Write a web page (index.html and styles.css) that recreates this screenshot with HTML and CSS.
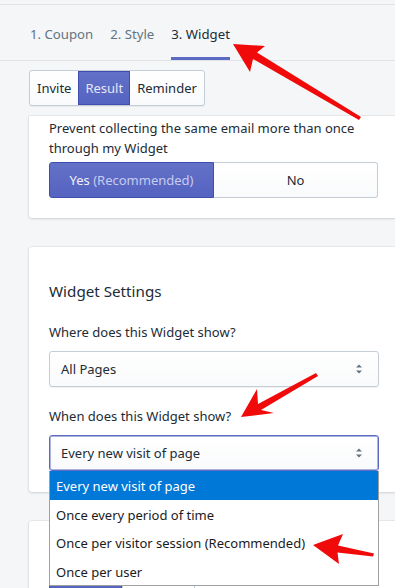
FILE: index.html
```html
<!DOCTYPE html>
<html>
<head>
<meta charset="utf-8">
<link rel="stylesheet" href="styles.css">
</head>
<body>
<div class="page">
  <div class="topline"></div>
  <nav class="tabs">
    <a class="tab">1. Coupon</a>
    <a class="tab">2. Style</a>
    <a class="tab active">3. Widget</a>
  </nav>
  <div class="content">
    <div class="btn-group">
      <button class="seg">Invite</button>
      <button class="seg primary">Result</button>
      <button class="seg">Reminder</button>
    </div>

    <section class="card card-first">
      <p class="text">Prevent collecting the same email more than once through my Widget</p>
      <div class="choice">
        <button class="choice-btn primary">Yes <span class="dim">(Recommended)</span></button>
        <button class="choice-btn">No</button>
      </div>
    </section>

    <section class="card card-settings">
      <h2 class="card-title">Widget Settings</h2>
      <label class="label">Where does this Widget show?</label>
      <div class="select">
        <span>All Pages</span>
        <svg class="caret" width="8" height="12" viewBox="0 0 8 12"><path d="M4 1.5 L7 4.5 L1 4.5 Z M4 10.5 L7 7.5 L1 7.5 Z" fill="#637381"/></svg>
      </div>
      <label class="label label-second">When does this Widget show?</label>
      <div class="select-wrap">
        <div class="select focused">
          <span>Every new visit of page</span>
          <svg class="caret" width="8" height="12" viewBox="0 0 8 12"><path d="M4 1.5 L7 4.5 L1 4.5 Z M4 10.5 L7 7.5 L1 7.5 Z" fill="#637381"/></svg>
        </div>
        <ul class="dropdown">
          <li class="opt selected">Every new visit of page</li>
          <li class="opt">Once every period of time</li>
          <li class="opt">Once per visitor session (Recommended)</li>
          <li class="opt">Once per user</li>
        </ul>
      </div>
    </section>

    <section class="card card-third">
      <div class="mini-group">
        <span class="mini primary"></span>
        <span class="mini"></span>
      </div>
    </section>
  </div>

  <svg class="arrows" width="395" height="588" viewBox="0 0 395 588">
    <polygon fill="#f00a0a" points="233,44 265,46 257,52.5 361,117 359,120 253,59 250,72"/>
    <polygon fill="#f00a0a" points="241,417 257,389 258,404 316,373 318,376 261,410 274,413"/>
    <polygon fill="#f00a0a" points="313,545 343,534 338,545.5 374,553.5 373,556.5 337.5,552.5 339,564"/>
  </svg>
</div>
</body>
</html>
```

FILE: styles.css
```css
* { box-sizing: border-box; }
html, body { margin: 0; padding: 0; }
body {
  width: 395px;
  height: 588px;
  overflow: hidden;
  background: #f4f6f8;
  font-family: "Noto Sans", "Open Sans", sans-serif;
  color: #212b36;
  font-size: 13px;
}
.page { position: relative; width: 395px; height: 588px; overflow: hidden; }
.topline { height: 5px; border-bottom: 1px solid #dfe3e8; }
.tabs {
  display: flex;
  padding-left: 30px;
  gap: 17px;
  border-bottom: 1px solid #dfe3e8;
  height: 56px;
}
.tab {
  height: 55px;
  padding-top: 5px;
  display: flex;
  align-items: center;
  font-size: 13.2px;
  color: #637381;
  border-bottom: 3px solid transparent;
}
.tab.active { color: #212b36; border-bottom-color: #5c6ac4; }
.content { padding: 9px 0 0 29px; }
.btn-group {
  display: inline-flex;
  height: 36px;
  border: 1px solid #c4cdd5;
  border-radius: 3px;
  background: linear-gradient(#fff, #f9fafb);
  box-shadow: 0 1px 0 rgba(22,29,37,.05);
  overflow: hidden;
}
.seg {
  font: inherit;
  font-size: 13px;
  color: #212b36;
  background: transparent;
  border: 0;
  padding: 0 7px;
  height: 34px;
}
.seg.primary {
  background: linear-gradient(#6371c7, #5563c1);
  color: #e3e6f7;
  box-shadow: inset 0 0 0 1px #3f4eae;
}
.card {
  width: 370px;
  background: #fff;
  border-radius: 3px;
  box-shadow: 0 0 0 1px rgba(63,63,68,.06), 0 1px 3px 0 rgba(63,63,68,.15);
  padding: 0 20px;
}
.card-first { margin-top: 10px; padding-top: 2px; padding-bottom: 20px; border-radius: 0 0 3px 3px; }
.text { margin: 0; line-height: 20px; width: 320px; }
.choice { display: flex; margin-top: 4px; height: 36px; width: 329px; }
.choice-btn {
  flex: 1;
  font: inherit;
  font-size: 13px;
  color: #212b36;
  background: linear-gradient(#fff, #f9fafb);
  border: 1px solid #c4cdd5;
  border-left: 0;
  border-radius: 0 3px 3px 0;
}
.choice-btn.primary {
  background: linear-gradient(#6371c7, #5563c1);
  border: 1px solid #3f4eae;
  color: #eef0fb;
  border-radius: 3px 0 0 3px;
}
.dim { color: #c6cbef; }
.card-settings { margin-top: 29px; padding-top: 32px; padding-bottom: 21px; }
.card-title { margin: 0; font-size: 15.2px; font-weight: 400; line-height: 24px; }
.label { display: block; margin-top: 19px; line-height: 20px; }
.label-second { margin-top: 19px; }
.select {
  margin-top: 9px;
  width: 330px;
  height: 36px;
  border: 1px solid #c4cdd5;
  border-radius: 3px;
  background: linear-gradient(#fff, #f9fafb);
  box-shadow: 0 1px 0 rgba(22,29,37,.05);
  display: flex;
  align-items: center;
  justify-content: space-between;
  padding: 0 15px 0 11px;
}
.select-wrap { position: relative; }
.select.focused { border: 1px solid #5c6ac4; box-shadow: inset 0 0 0 1px rgba(92,106,196,.5); }
.caret { display: block; }
.dropdown {
  position: absolute;
  left: 0;
  top: 36px;
  width: 330px;
  margin: 0;
  padding: 0;
  list-style: none;
  background: #fff;
  border: 1px solid #a0a0a0;
  border-top: 0;
  z-index: 5;
}
.opt { height: 28.5px; line-height: 30px; padding-left: 6px; color: #1b1b1b; }
.opt.selected { background: #0078d7; color: #fff; }
.card-third { margin-top: 29px; height: 100px; padding-top: 64px; }
.mini-group { display: flex; height: 36px; }
.mini { width: 73px; border: 1px solid #c4cdd5; }
.mini.primary { background: #5563c1; border-color: #3f4eae; }
.arrows { position: absolute; left: 0; top: 0; pointer-events: none; z-index: 10; }
```
